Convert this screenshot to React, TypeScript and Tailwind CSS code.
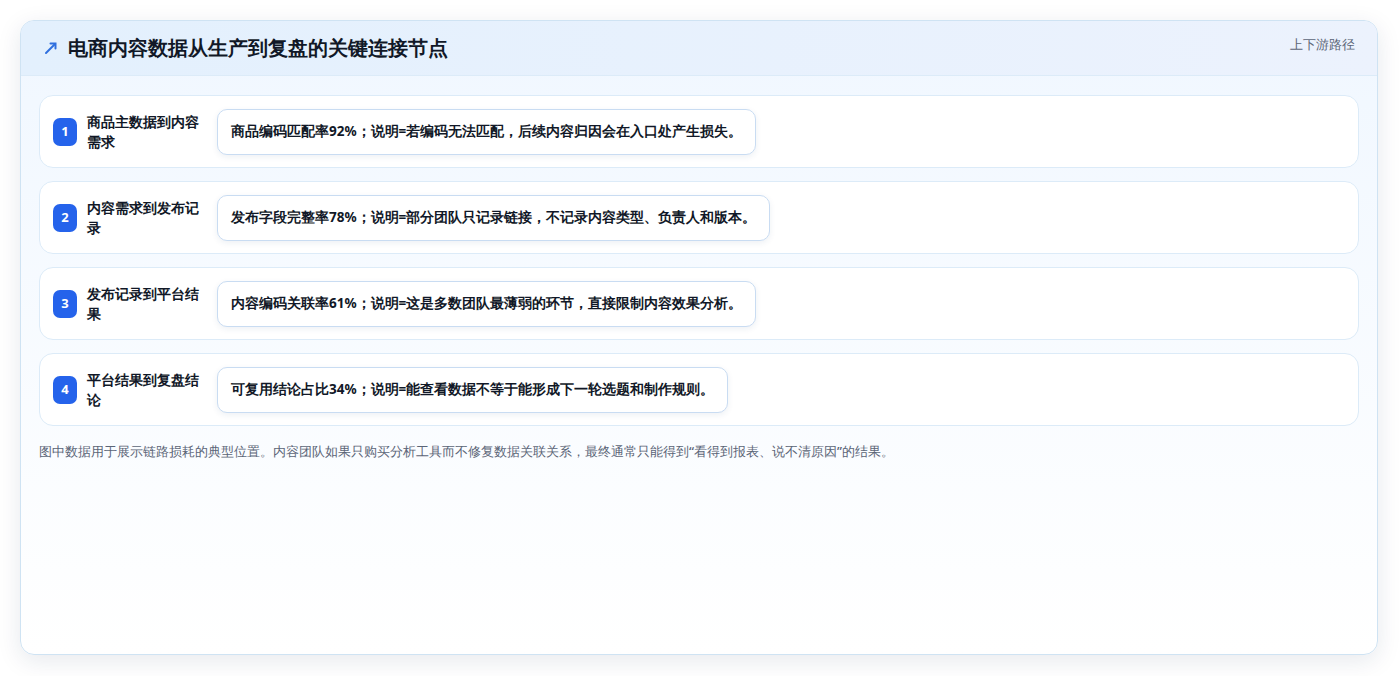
const rows = [
  { t: '商品主数据到内容需求', d: '商品编码匹配率92%；说明=若编码无法匹配，后续内容归因会在入口处产生损失。' },
  { t: '内容需求到发布记录', d: '发布字段完整率78%；说明=部分团队只记录链接，不记录内容类型、负责人和版本。' },
  { t: '发布记录到平台结果', d: '内容编码关联率61%；说明=这是多数团队最薄弱的环节，直接限制内容效果分析。' },
  { t: '平台结果到复盘结论', d: '可复用结论占比34%；说明=能查看数据不等于能形成下一轮选题和制作规则。' },
];

export default function App() {
  return (
    <div className="w-[1399px] h-[676px] bg-white p-[20px] pr-[21px] pb-[21px] font-['Noto_Sans_CJK_SC',sans-serif]">
      <div className="h-full rounded-[14px] border border-[#cfe3f3] bg-gradient-to-b from-[#f0f7ff] to-white shadow-[0_6px_24px_rgba(15,40,80,0.10)] overflow-hidden flex flex-col">
        <div className="h-[55px] shrink-0 flex items-start justify-between bg-gradient-to-r from-[#e3f0fd] to-[#ecf2fd] border-b border-[#dcebf8] px-[22px]">
          <div className="flex items-center gap-[9px] h-full">
            <svg width="16" height="16" viewBox="0 0 16 16" fill="none" stroke="#2f6fde" strokeWidth="2" strokeLinecap="round">
              <path d="M3 13L12 4" />
              <path d="M7.5 3.5h5v5" />
            </svg>
            <span className="text-[19.5px] font-bold text-[#111827]">电商内容数据从生产到复盘的关键连接节点</span>
          </div>
          <span className="mt-[14px] text-[13px] text-[#5b6577] font-medium">上下游路径</span>
        </div>
        <div className="px-[18px] pt-[19px] flex flex-col gap-[13px]">
          {rows.map((r, i) => (
            <div key={i} className="h-[73px] rounded-[14px] border border-[#dcebf8] bg-white flex items-center px-[13px]">
              <div className="w-[24px] h-[28px] rounded-[7px] bg-[#2563eb] text-white text-[13px] font-bold flex items-center justify-center shrink-0">{i + 1}</div>
              <div className="w-[112px] ml-[10px] text-[14px] font-bold text-[#111827] leading-[20px]">{r.t}</div>
              <div className="ml-[18px] h-[46px] flex items-center px-[13px] rounded-[10px] border border-[#c9dcf2] bg-white shadow-[0_2px_6px_rgba(30,60,120,0.08)] text-[13.5px] font-bold text-[#111827] whitespace-nowrap">{r.d}</div>
            </div>
          ))}
          <p className="mt-[3px] text-[13px] font-medium text-[#5b6577]">图中数据用于展示链路损耗的典型位置。内容团队如果只购买分析工具而不修复数据关联关系，最终通常只能得到“看得到报表、说不清原因”的结果。</p>
        </div>
      </div>
    </div>
  );
}
